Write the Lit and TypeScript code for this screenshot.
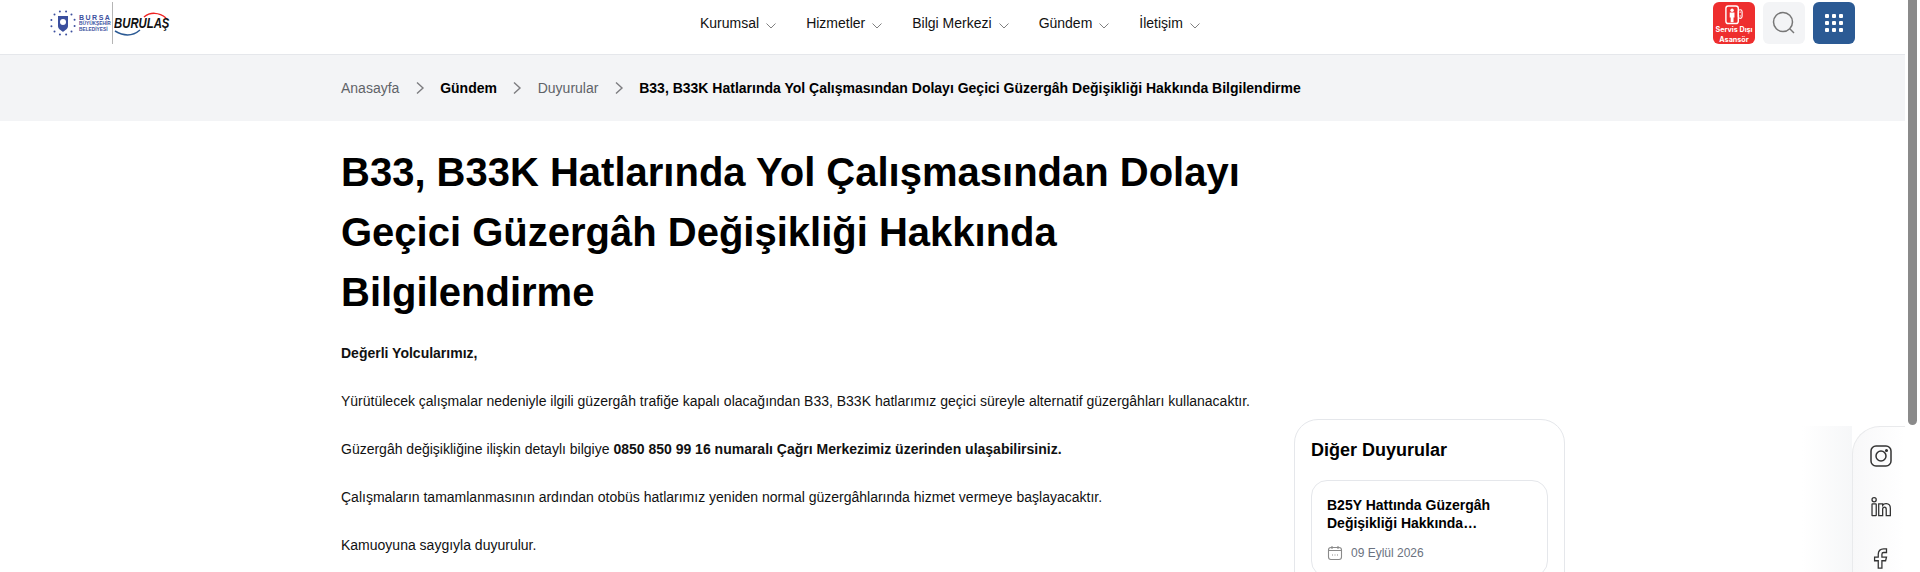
import { LitElement, html, css, svg } from "lit";
import { customElement } from "lit/decorators.js";

const chevDown = html`<svg class="chev" viewBox="0 0 10 6" width="10" height="6"><path d="M.5.5 5 5 9.500.5" fill="none" stroke="#808080" stroke-width="1"/></svg>`;
const chevRight = html`<svg class="crumb-sep" viewBox="0 0 10 14" width="10" height="14"><path d="M2 1.500 8 7l-6 5.500" fill="none" stroke="#7d7d80" stroke-width="1.400"/></svg>`;

@customElement("app-root")
export class AppRoot extends LitElement {
  static styles = css`
    :host { display: block; height: 572px; overflow: hidden; position: relative; font-family: "Liberation Sans", Arial, sans-serif; color: #000; background: #fff; }
    header { height: 54px; box-sizing: content-box; border-bottom: 1px solid #e5e7eb; display: grid; grid-template-columns: 650px auto 1fr; align-items: start; padding: 0 65px 0 50px; background: #fff; }
    .logo { display: flex; align-items: center; height: 42px; margin-top: 2px; }
    .logo-left { display: flex; align-items: center; gap: 3px; width: 62px; }
    .bb { color: #3b4f9e; font-weight: 700; font-size: 4.800px; line-height: 5.500px; white-space: nowrap; }
    .bb b { display: block; font-size: 7px; letter-spacing: 1.500px; line-height: 7px; }
    .divider { width: 1px; height: 42px; background: #b5b5b5; margin-right: 1px; }
    .burulas { position: relative; width: 56px; height: 28px; display: flex; align-items: center; }
    .burulas span { font-size: 14px; font-weight: 700; font-style: italic; color: #111; line-height: 1; position: relative; display: block; transform: scaleX(.81); transform-origin: left center; white-space: nowrap; }
    .burulas svg { position: absolute; inset: 0; }
    nav { display: flex; gap: 30px; align-items: center; height: 42px; margin-top: 2px; font-size: 14px; color: #111; }
    nav a { display: flex; align-items: center; gap: 7px; }
    .chev { margin-top: 5px; }
    .actions { display: flex; gap: 8px; justify-content: flex-end; margin-top: 2px; }
    .act { width: 42px; height: 42px; border-radius: 6px; display: flex; align-items: center; justify-content: center; }
    .lift { background: #ee2e2e; color: #fff; flex-direction: column; justify-content: flex-start; padding-top: 3px; box-sizing: border-box; font-size: 7.200px; line-height: 9.500px; font-weight: 700; text-align: center; font-family: "Inter", sans-serif; white-space: nowrap; }
    .search { background: #f3f4f6; }
    .apps { background: #2b5a94; }
    .dots { display: grid; grid-template-columns: repeat(3, 4px); gap: 3px; }
    .dots i { width: 4px; height: 4px; background: #fff; border-radius: 1px; }
    .crumbs { height: 66px; background: #f3f4f6; display: flex; align-items: center; padding-left: 341px; font-size: 14px; gap: 14.400px; }
    .crumbs .g { color: #5f6368; }
    .crumbs b { font-weight: 700; color: #000; }
    .crumb-sep { margin: 0 1px; }
    main { display: flex; padding-left: 341px; }
    article { width: 916px; padding-top: 21px; flex: none; }
    h1 { margin: 0 0 19px; font-size: 40px; line-height: 60px; font-weight: 700; }
    p { margin: 0 0 24px; font-size: 14px; line-height: 24px; color: #111; }
    aside { margin-left: 37px; margin-top: 298px; width: 271px; height: 300px; box-sizing: border-box; border: 1px solid #e5e7eb; border-radius: 24px; padding: 16px; flex: none; }
    aside h2 { margin: 0 0 16px; font-size: 18px; line-height: 28px; font-weight: 700; }
    .card { border: 1px solid #e5e7eb; border-radius: 16px; padding: 15px; }
    .card h3 { margin: 0 0 13px; font-size: 14px; line-height: 18px; font-weight: 700; }
    .date { display: flex; align-items: center; gap: 8px; font-size: 12px; color: #6b7280; line-height: 16px; }
    .social { position: absolute; right: 15px; top: 426px; width: 53px; height: 160px; border: 1px solid #e9eaec; border-right: 0; border-radius: 28px 0 0 0; box-sizing: border-box; background: linear-gradient(90deg, #f8f8f9, #fff); display: flex; flex-direction: column; align-items: center; gap: 29px; padding: 18px 0 0 3px; }
    .fade { position: absolute; right: 68px; top: 426px; width: 50px; height: 146px; background: linear-gradient(90deg, rgba(243,244,246,0), rgba(243,244,246,.75)); }
    .bar { position: absolute; right: 0; top: 0; width: 15px; height: 572px; background: #fff; }
    .thumb { position: absolute; left: 3px; top: 0; width: 9px; height: 425px; background: #8a8a8a; border-radius: 0 0 5px 5px; }
  `;

  render() {
    const items = ["Kurumsal", "Hizmetler", "Bilgi Merkezi", "Gündem", "İletişim"];
    return html`
      <header>
        <div class="logo">
          <div class="logo-left">
            <svg width="26" height="26" viewBox="0 0 26 26">
              ${[0,1,2,3,4,5,6,7,8,9,10,11].map((i) => {
                const a = (i * Math.PI) / 6 + 0.26;
                return svg`<circle cx=${13 + 12 * Math.cos(a)} cy=${13 + 12 * Math.sin(a)} r="1" fill="#3b4f9e"/>`;
              })}
              <path d="M8 6h10v10c0 3-3 4-5 6-2-2-5-3-5-6z" fill="#3b4f9e"/>
              <circle cx="13" cy="12" r="3" fill="#fff"/>
            </svg>
            <div class="bb"><b>BURSA</b>BÜYÜKŞEHİR<br />BELEDİYESİ</div>
          </div>
          <div class="divider"></div>
          <div class="burulas">
            <svg viewBox="0 0 56 28" width="56" height="28">
              <path d="M30 8c6-5 15-5 22 1" fill="none" stroke="#e22" stroke-width="1.500"/>
              <path d="M1 22c10 6 18 5 25-1" fill="none" stroke="#2b5a94" stroke-width="1.500"/>
            </svg>
            <span>BURULAŞ</span>
          </div>
        </div>
        <nav>${items.map((t) => html`<a>${t}${chevDown}</a>`)}</nav>
        <div class="actions">
          <div class="act lift">
            <svg width="20" height="21" viewBox="0 0 20 21" fill="none" stroke="#fff" stroke-width="1.500"><rect x="1.500" y="1" width="13" height="18.500" rx="2.500"/><circle cx="8" cy="5.500" r="1.800" fill="#fff" stroke="none"/><path d="M5.500 8h5v5h-1v5h-3v-5h-1z" fill="#fff" stroke="none"/><rect x="14.500" y="5" width="4" height="9" rx="2" stroke-width="1.200"/><circle cx="16.500" cy="7.500" r=".7" fill="#fff" stroke="none"/><circle cx="16.500" cy="11.500" r=".7" fill="#fff" stroke="none"/></svg>
            <span>Servis Dışı<br />Asansör</span>
          </div>
          <div class="act search">
            <svg width="24" height="24" viewBox="0 0 24 24"><circle cx="11" cy="11" r="9.500" fill="none" stroke="#777" stroke-width="1.500"/><path d="m18 18 4 4" stroke="#777" stroke-width="1.500"/></svg>
          </div>
          <div class="act apps"><div class="dots">${Array.from({ length: 9 }, () => html`<i></i>`)}</div></div>
        </div>
      </header>
      <div class="crumbs">
        <span class="g">Anasayfa</span>${chevRight}
        <b>Gündem</b>${chevRight}
        <span class="g">Duyurular</span>${chevRight}
        <b>B33, B33K Hatlarında Yol Çalışmasından Dolayı Geçici Güzergâh Değişikliği Hakkında Bilgilendirme</b>
      </div>
      <main>
        <article>
          <h1>B33, B33K Hatlarında Yol Çalışmasından Dolayı Geçici Güzergâh Değişikliği Hakkında Bilgilendirme</h1>
          <p><b>Değerli Yolcularımız,</b></p>
          <p>Yürütülecek çalışmalar nedeniyle ilgili güzergâh trafiğe kapalı olacağından B33, B33K hatlarımız geçici süreyle alternatif güzergâhları kullanacaktır.</p>
          <p>Güzergâh değişikliğine ilişkin detaylı bilgiye <b>0850 850 99 16 numaralı Çağrı Merkezimiz üzerinden ulaşabilirsiniz.</b></p>
          <p>Çalışmaların tamamlanmasının ardından otobüs hatlarımız yeniden normal güzergâhlarında hizmet vermeye başlayacaktır.</p>
          <p>Kamuoyuna saygıyla duyurulur.</p>
        </article>
        <aside>
          <h2>Diğer Duyurular</h2>
          <div class="card">
            <h3>B25Y Hattında Güzergâh Değişikliği Hakkında…</h3>
            <div class="date">
              <svg width="16" height="16" viewBox="0 0 16 16" fill="none" stroke="#8a8a8a" stroke-width="1.100"><rect x="1.500" y="2.500" width="13" height="12" rx="2.500"/><path d="M1.500 5.500h13M5 1v3M11 1v3M5 10h1M7.500 10h1M10 10h1"/></svg>
              09 Eylül 2026
            </div>
          </div>
        </aside>
      </main>
      <div class="fade"></div>
      <div class="social">
        <svg width="22" height="22" viewBox="0 0 22 22" fill="none" stroke="#333" stroke-width="1.500"><rect x="1" y="1" width="20" height="20" rx="5"/><circle cx="11" cy="11" r="5"/><circle cx="16.500" cy="5.500" r=".8" fill="#333"/></svg>
        <svg width="22" height="22" viewBox="0 0 22 24" fill="none" stroke="#333" stroke-width="1.400"><circle cx="3.500" cy="4" r="2.300"/><rect x="1.200" y="8.500" width="4.600" height="13" rx=".5"/><path d="M8.500 21.500V8.500h4.300v1.700c1-1.400 2.600-2 4-1.900 2.800.2 4.400 2 4.400 5v8.200h-4.500v-7c0-1.500-.7-2.400-1.900-2.400-1.200 0-2 .9-2 2.400v7z"/></svg>
        <svg width="22" height="22" viewBox="0 0 22 24" fill="none" stroke="#333" stroke-width="1.400"><path d="M8 23v-8H4v-4h4V8c0-4 2.500-6 6-6h3v4h-3c-1.500 0-2 .8-2 2v3h5l-1 4h-4v8z"/></svg>
      </div>
      <div class="bar"><div class="thumb"></div></div>
    `;
  }
}
